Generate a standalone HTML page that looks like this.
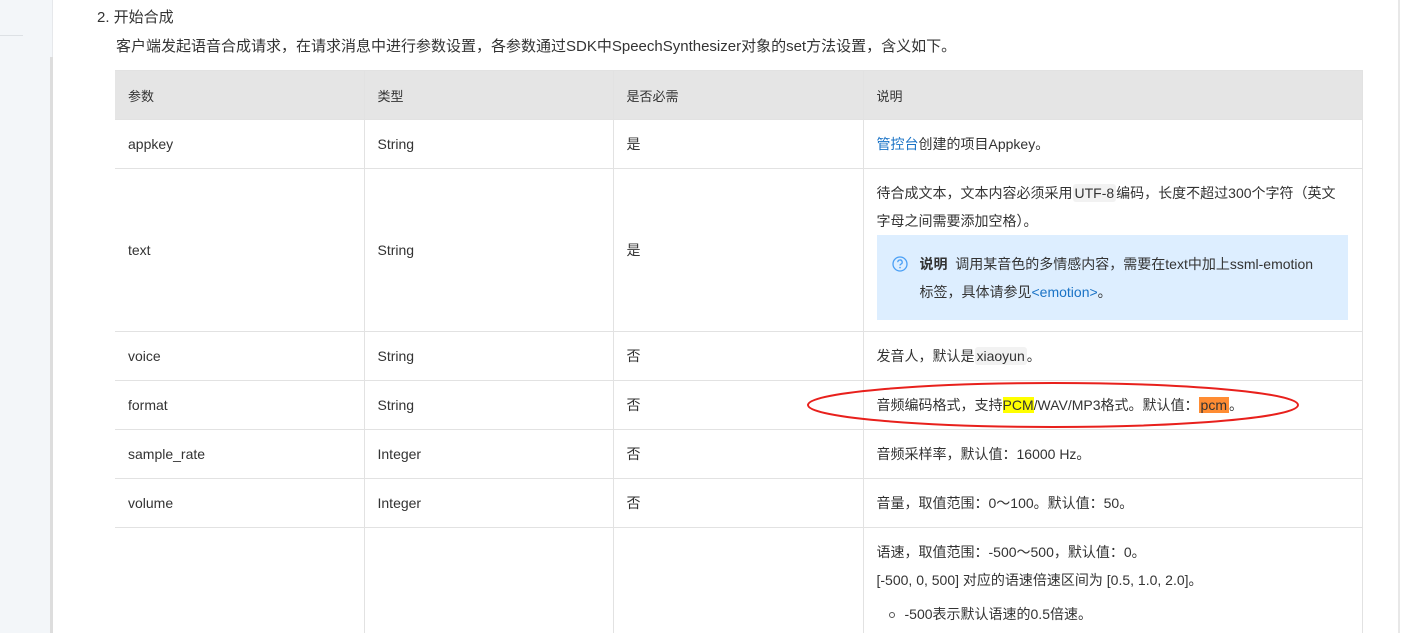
<!DOCTYPE html>
<html><head><meta charset="utf-8"><style>
*{margin:0;padding:0;box-sizing:border-box}
html,body{width:1415px;height:633px;overflow:hidden}
body{background:#fff;font-family:"Liberation Sans","Noto Sans CJK SC",sans-serif;color:#333;position:relative}
.side{position:absolute;left:0;top:0;width:53px;height:633px;background:#f3f6f9;border-right:1px solid #e6e8eb}
.side .ln{position:absolute;left:0;top:35px;width:23px;height:1px;background:#dde1e5}
.side .sb{position:absolute;left:50px;top:57px;width:3px;height:576px;background:#ddd}
.rb{position:absolute;left:1398px;top:0;width:2px;height:633px;background:#e8e8e8}
.h{position:absolute;left:97px;top:8px;font-size:15px;line-height:20px;color:#333}
.p{position:absolute;left:116px;top:37px;font-size:15px;line-height:20px;color:#333}
table{position:absolute;left:115px;top:70px;border-collapse:collapse;font-size:14px;table-layout:fixed;width:1247px}
td,th{border:1px solid #e2e2e2;padding:0 13px;text-align:left;vertical-align:middle;font-weight:normal;color:#333}
th{background:#e5e5e5;height:49px;font-size:13px}
td{height:49px}
tr>*:first-child{border-left:none}
.code{background:#f2f2f2;padding:1px 2px;border-radius:3px}
a{color:#1a73c6;text-decoration:none}
.note{background:#ddeeff;margin:0;padding:15px 22px 14px 43px;position:relative;line-height:28px;width:471px;height:85px;font-size:14px}
.note svg{position:absolute;left:15px;top:21px}
.y{background:#ff0}
.o{background:#ff8c33;padding:0 2px}
.ell{position:absolute;left:0;top:0}
</style></head><body>
<div class="side"><div class="ln"></div><div class="sb"></div></div>
<div class="rb"></div>
<div class="h">2. 开始合成</div>
<div class="p">客户端发起语音合成请求，在请求消息中进行参数设置，各参数通过SDK中SpeechSynthesizer对象的set方法设置，含义如下。</div>
<table>
<colgroup><col style="width:249px"><col style="width:249px"><col style="width:250px"><col style="width:499px"></colgroup>
<tr><th>参数</th><th>类型</th><th>是否必需</th><th>说明</th></tr>
<tr><td>appkey</td><td>String</td><td>是</td><td><a>管控台</a>创建的项目Appkey。</td></tr>
<tr><td style="height:162px">text</td><td>String</td><td>是</td><td style="padding-top:10px;padding-bottom:11px;height:162px"><div style="line-height:28px">待合成文本，文本内容必须采用<span class="code">UTF-8</span>编码，长度不超过300个字符（英文字母之间需要添加空格）。</div>
<div class="note"><svg width="16" height="16" viewBox="0 0 16 16"><circle cx="8" cy="8" r="7" fill="none" stroke="#4a9ff5" stroke-width="1.3"/><path d="M5.8 6.2a2.2 2.2 0 1 1 3 2c-.6.3-.8.6-.8 1.3" fill="none" stroke="#4a9ff5" stroke-width="1.3"/><circle cx="8" cy="11.6" r=".8" fill="#4a9ff5"/></svg><b>说明</b>&nbsp; 调用某音色的多情感内容，需要在text中加上ssml-emotion<br>标签，具体请参见<a>&lt;emotion&gt;</a>。</div></td></tr>
<tr><td>voice</td><td>String</td><td>否</td><td>发音人，默认是<span class="code">xiaoyun</span>。</td></tr>
<tr><td>format</td><td>String</td><td>否</td><td>音频编码格式，支持<span class="y">PCM</span>/WAV/MP3格式。默认值：<span class="o">pcm</span>。</td></tr>
<tr><td>sample_rate</td><td>Integer</td><td>否</td><td>音频采样率，默认值：16000 Hz。</td></tr>
<tr><td>volume</td><td>Integer</td><td>否</td><td>音量，取值范围：0～100。默认值：50。</td></tr>
<tr><td style="height:120px"></td><td></td><td></td><td style="vertical-align:top;padding-top:10px;line-height:28px">语速，取值范围：-500～500，默认值：0。<br>[-500, 0, 500] 对应的语速倍速区间为 [0.5, 1.0, 2.0]。<div style="margin-top:6px;padding-left:12px"><span style="display:inline-block;width:6px;height:6px;border:1px solid #555;border-radius:50%;margin-right:10px;vertical-align:middle"></span>-500表示默认语速的0.5倍速。</div></td></tr>
</table>
<svg class="ell" width="1415" height="633"><ellipse cx="1053" cy="405" rx="245" ry="22" fill="none" stroke="#e8201c" stroke-width="2"/></svg>
</body></html>
